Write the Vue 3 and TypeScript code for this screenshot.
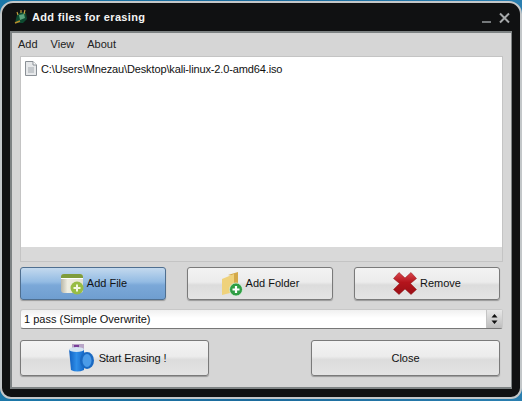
<script setup lang="ts">
const menus: string[] = ['Add', 'View', 'About']
</script>

<template>
  <div class="desktop">
    <div class="window">
      <header class="titlebar">
        <svg class="app-icon" width="16" height="16" viewBox="0 0 16 16">
          <path d="M2 14 L4 6 L8 3 L13 4 L14 10 L10 14 Z" fill="#0d4a30" />
          <path d="M6 6 L11 5 L12 9 L7 11 Z" fill="#5aa37c" />
          <path d="M4 3 L5 6 M8 1 L8 4 M12 1 L11 5" stroke="#c9a540" stroke-width="1.1" />
          <path d="M2 14 L7 12" stroke="#b98c2c" stroke-width="1.5" />
        </svg>
        <span class="title">Add files for erasing</span>
        <span class="controls">
          <svg width="34" height="14" viewBox="0 0 34 14">
            <path d="M1 11 H10" stroke="#8f9396" stroke-width="1.6" />
            <path d="M19 2.500 L28 11.500 M28 2.500 L19 11.500" stroke="#a5a8aa" stroke-width="2" />
          </svg>
        </span>
      </header>
      <main class="panel">
        <nav class="menu">
          <span v-for="m in menus" :key="m">{{ m }}</span>
        </nav>
        <section class="list">
          <div class="list-white">
            <div class="row">
              <svg width="12" height="15" viewBox="0 0 12 15">
                <path d="M.5 .5 H8 L11.5 4 V14.5 H.5 Z" fill="#e6e8ea" stroke="#8a9096" />
                <path d="M8 .5 V4 H11.5" fill="#fff" stroke="#8a9096" />
                <rect x="3" y="6" width="6" height="6" fill="#c4c8cc" />
              </svg>
              <span class="path">C:\Users\Mnezau\Desktop\kali-linux-2.0-amd64.iso</span>
            </div>
          </div>
        </section>
        <div class="actions">
          <button class="btn active">
            <svg width="25" height="22" viewBox="0 0 25 22">
              <defs>
                <linearGradient id="body" x1="0" y1="0" x2="1" y2="0">
                  <stop offset="0" stop-color="#b9b7a8" />
                  <stop offset=".3" stop-color="#efeee2" />
                  <stop offset="1" stop-color="#e4e2d0" />
                </linearGradient>
              </defs>
              <rect x="2" y="1" width="22" height="19" rx="3" fill="url(#body)" />
              <path d="M2 5 V4 a3 3 0 0 1 3 -3 H21 a3 3 0 0 1 3 3 V5 Z" fill="#7f9c3c" />
              <rect x="2" y="5" width="22" height="1" fill="#fff" />
              <circle cx="18" cy="15" r="6.500" fill="#98bd45" />
              <path d="M18 11.500 V18.500 M14.500 15 H21.500" stroke="#f4f8e4" stroke-width="2" />
            </svg>
            Add File
          </button>
          <button class="btn">
            <svg width="22" height="26" viewBox="0 0 22 26">
              <path d="M7 4 L17 1 V19 L12 21 V5 Z" fill="#d4a94a" />
              <path d="M1 8 L13 3 V21 L1 24 Z" fill="#efd27c" />
              <circle cx="15" cy="18.500" r="6.500" fill="#2f9e44" stroke="#e6f5e8" stroke-width=".7" />
              <path d="M15 15 V22 M11.500 18.500 H18.500" stroke="#fff" stroke-width="2.200" />
            </svg>
            Add Folder
          </button>
          <button class="btn">
            <svg width="24" height="23" viewBox="0 0 24 23">
              <defs>
                <linearGradient id="cross" x1="0" y1="0" x2="0" y2="1">
                  <stop offset="0" stop-color="#d9474e" />
                  <stop offset=".45" stop-color="#b4141c" />
                  <stop offset="1" stop-color="#9a0f16" />
                </linearGradient>
              </defs>
              <path d="M6 .5 L12 6 L18 .5 L23.500 6.500 L17.500 11.500 L23.500 17.500 L18 22.500 L12 17 L6 22.500 L.5 17.500 L6.500 11.500 L.5 6.500 Z" fill="url(#cross)" stroke="#8d1015" stroke-width=".5" />
            </svg>
            Remove
          </button>
        </div>
        <div class="combo">
          <span class="combo-text">1 pass (Simple Overwrite)</span>
          <span class="spin">
            <svg width="7" height="12" viewBox="0 0 7 12">
              <path d="M3.500 1 L6.500 4.500 H.5 Z M.5 7.500 H6.500 L3.500 11 Z" fill="#111" />
            </svg>
          </span>
        </div>
        <div class="bottom">
          <button class="btn big">
            <svg class="start-icon" width="27" height="29" viewBox="0 0 27 29">
              <defs>
                <linearGradient id="tub" x1="0" y1="0" x2="1" y2="0">
                  <stop offset="0" stop-color="#0f5fc0" />
                  <stop offset=".5" stop-color="#2f8ee8" />
                  <stop offset="1" stop-color="#1568c8" />
                </linearGradient>
              </defs>
              <rect x="3" y="0" width="12" height="5" fill="#b9a6c8" />
              <rect x="5" y="1" width="5" height="3" fill="#7a3f9a" />
              <path d="M0 5 H15 L15 26 Q8 29 2 26 Z" fill="url(#tub)" />
              <ellipse cx="7.500" cy="5.500" rx="7.500" ry="2.500" fill="#d5e4f2" />
              <ellipse cx="18" cy="16.500" rx="7" ry="8.500" fill="#1a69c2" />
              <ellipse cx="18" cy="16.500" rx="4.500" ry="6.500" fill="#4b9be8" />
            </svg>
            <span class="start-label">Start Erasing !</span>
          </button>
          <button class="btn big">Close</button>
        </div>
      </main>
    </div>
  </div>
</template>

<style>
html, body { margin: 0; padding: 0; background: #1c6d9e; }
</style>

<style scoped>
.desktop {
  width: 522px;
  height: 401px;
  box-sizing: border-box;
  padding: 1px 0 2px 0;
  background: linear-gradient(90deg, #1b77a8, #1b6b9c 50%, #2a7fb0);
  font-family: "Liberation Sans", Arial, sans-serif;
  font-size: 11px;
  color: #111;
  overflow: hidden;
}
.window {
  box-sizing: border-box;
  height: 398px;
  border: 2px solid #c3c7c9;
  border-radius: 13px 13px 11px 11px;
  background: #101112;
  padding: 0 8px 8px 8px;
  display: flex;
  flex-direction: column;
}
.titlebar {
  height: 28px;
  flex: none;
  display: flex;
  align-items: center;
  padding: 0 0 0 3px;
  color: #f4f4f4;
  box-sizing: border-box;
}
.app-icon { margin-right: 3px; }
.title { font-size: 11px; font-weight: bold; letter-spacing: 0.33px; }
.controls { margin-left: auto; margin-right: -3px; display: flex; padding-top: 1px; }
.panel {
  flex: 1;
  background: #d6d6d6;
  border: 1px solid #7d8283;
  border-width: 2px 1px 2px 2px;
  padding: 0 8px 10px 8px;
  display: flex;
  flex-direction: column;
}
.menu {
  height: 22px;
  flex: none;
  display: flex;
  gap: 13px;
  align-items: center;
  margin-left: -2px;
  color: #222;
}
.list {
  flex: none;
  height: 206px;
  box-sizing: border-box;
  margin-top: 1px;
  background: #d9d9d9;
  border: 1px solid #c4c4c4;
}
.list-white {
  height: 190px;
  background: #fff;
}
.row {
  display: flex;
  align-items: center;
  gap: 4px;
  padding: 4px 0 0 4px;
  height: 15px;
}
.path { letter-spacing: -0.13px; }
.actions {
  display: flex;
  justify-content: space-between;
  margin: 5px 3px 0 0;
  flex: none;
}
.actions .btn { padding-bottom: 2px; }
.actions svg { margin-top: 2px; }
.btn {
  width: 146px;
  height: 33px;
  padding: 0;
  display: flex;
  align-items: center;
  justify-content: center;
  gap: 3px;
  box-sizing: border-box;
  border: 1px solid #7a7a7a;
  border-radius: 3px;
  background: linear-gradient(180deg, #f3f3f3 0%, #ececec 45%, #dcdcdc 55%, #e4e4e4 100%);
  box-shadow: 0 1px 1px #9a9a9a;
  font-family: inherit;
  font-size: 11px;
  color: #111;
}
.btn.active {
  background: linear-gradient(180deg, #c3d9ee 0%, #93bbe3 45%, #7ba8d8 55%, #6f9ed0 100%);
  border-color: #4f6f90;
}
.combo {
  flex: none;
  margin-top: 9px;
  height: 20px;
  box-sizing: border-box;
  background: linear-gradient(180deg, #f0f0f0, #fff 45%, #fff);
  border: 1px solid #c8c8c8;
  border-bottom-color: #777;
  border-radius: 3px;
  display: flex;
  align-items: center;
  justify-content: space-between;
}
.combo-text { padding-left: 3px; }
.spin {
  width: 15px;
  height: 18px;
  display: flex;
  align-items: center;
  justify-content: center;
  background: linear-gradient(180deg, #e8e8e8, #bdbdbd);
  border-left: 1px solid #c4c4c4;
}
.bottom {
  display: flex;
  justify-content: space-between;
  margin: 11px 3px 0 0;
  flex: none;
}
.big { width: 189px; height: 36px; }
.start-icon { margin-left: 6px; }
.start-label { letter-spacing: -0.13px; }
</style>
